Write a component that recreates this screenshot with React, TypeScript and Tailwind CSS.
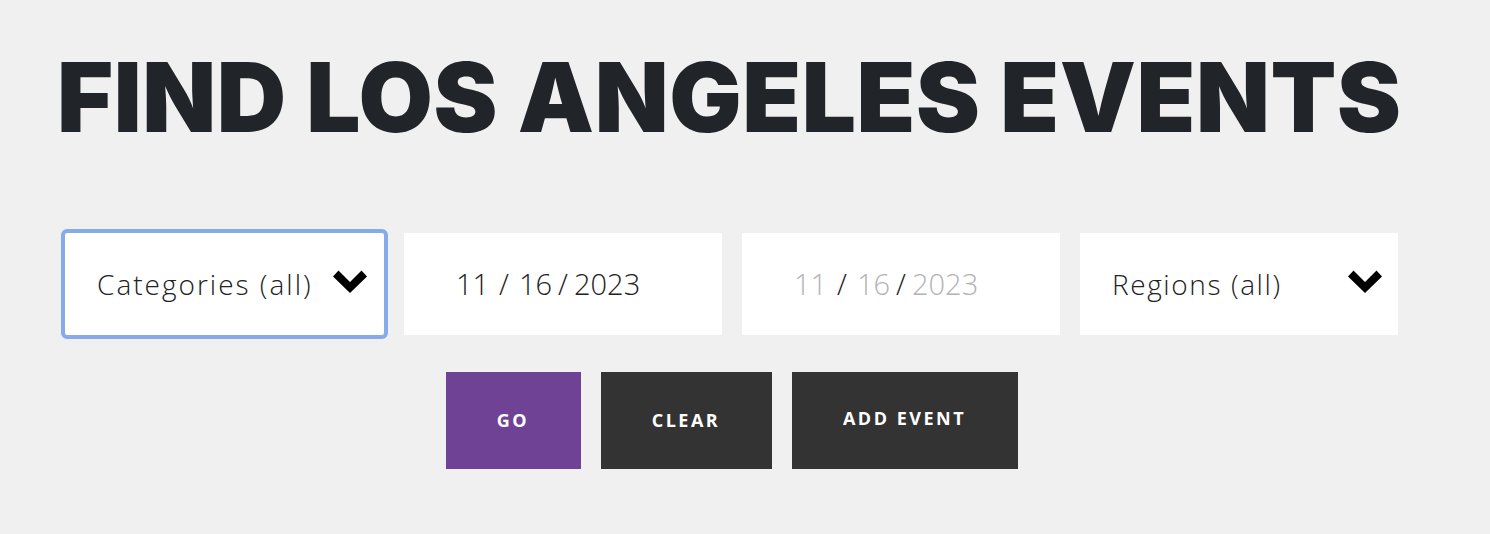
import React from "react"

function Chevron() {
  return (
    <svg viewBox="0 0 34 23" className="w-[34px] h-[23px] mb-[5px]" fill="#000">
      <polygon points="0,6.5 5.5,0.5 17,12 28.5,0.5 34,6.5 17,23" />
    </svg>
  )
}

const body = { fontFamily: "'Open Sans', 'Noto Sans', sans-serif" }

export default function App() {
  return (
    <div className="h-[534px] bg-[#f0f0f0] overflow-hidden" style={body}>
      <div className="pl-[57px] pt-[49px]">
        <h1
          className="text-[96px] leading-none font-black text-[#212529] tracking-[0.6px]"
          style={{ fontFamily: "Inter, 'Liberation Sans', sans-serif" }}
        >
          FIND LOS ANGELES EVENTS
        </h1>
      </div>

      <div className="w-[1333px] ml-[65px]">
        <div className="mt-[88px] flex gap-[20px]">
          <div className="w-[319px] h-[102px] bg-white flex items-center justify-between pl-[32px] pr-[17px] outline outline-[4px] outline-[#85abe8] rounded-[2px]">
            <span className="text-[28px] font-light text-[#222] tracking-[2px]">Categories (all)</span>
            <Chevron />
          </div>
          <div className="w-[318px] h-[102px] bg-white flex items-center pl-[52px] text-[29px] font-light text-[#222]">
            <span>11</span>
            <span className="mx-[10px]">/</span>
            <span>16</span>
            <span className="mx-[6px]">/</span>
            <span>2023</span>
          </div>
          <div className="w-[318px] h-[102px] bg-white flex items-center pl-[52px] text-[29px] font-light text-[#b3b3b3]">
            <span>11</span>
            <span className="mx-[10px] text-[#222]">/</span>
            <span>16</span>
            <span className="mx-[6px] text-[#222]">/</span>
            <span>2023</span>
          </div>
          <div className="w-[318px] h-[102px] bg-white flex items-center justify-between pl-[32px] pr-[16px]">
            <span className="text-[28px] font-light text-[#222] tracking-[1.6px]">Regions (all)</span>
            <Chevron />
          </div>
        </div>

        <div className="mt-[37px] flex justify-center gap-[20px]">
          <button className="w-[135px] h-[97px] bg-[#6f4296] text-white text-[18px] font-bold tracking-[2.5px]">GO</button>
          <button className="w-[171px] h-[97px] bg-[#333333] text-white text-[18px] font-bold tracking-[2.5px]">CLEAR</button>
          <button className="w-[226px] h-[97px] bg-[#333333] text-white text-[18px] font-bold tracking-[2.5px] pb-[4px]">ADD EVENT</button>
        </div>
      </div>
    </div>
  )
}
